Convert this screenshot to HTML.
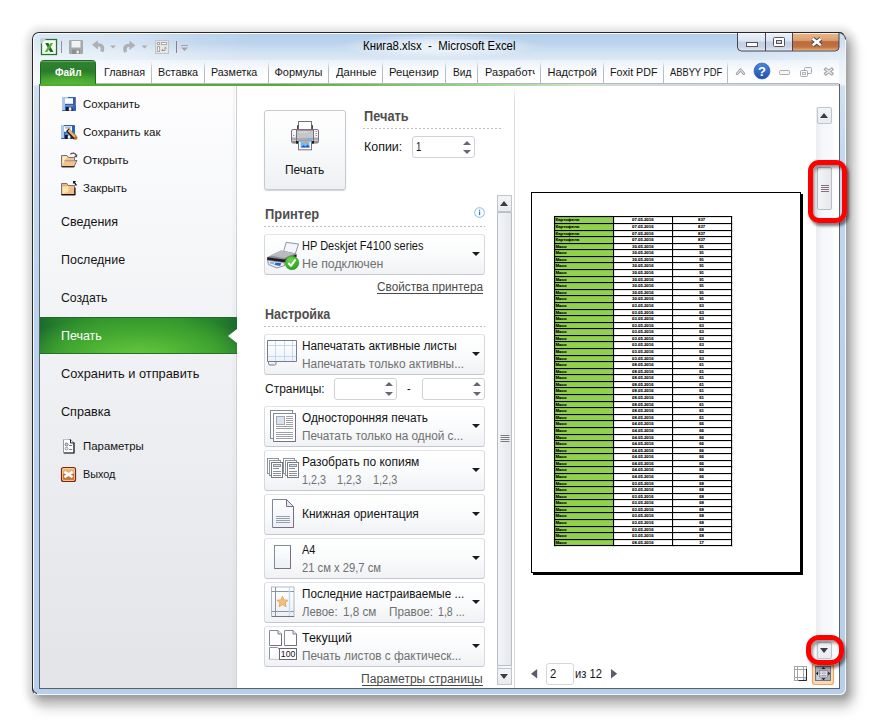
<!DOCTYPE html>
<html lang="ru">
<head>
<meta charset="utf-8">
<title>Книга8.xlsx - Microsoft Excel</title>
<style>
*{box-sizing:border-box;margin:0;padding:0}
html,body{width:879px;height:728px;overflow:hidden;background:#fff}
body{font-family:"Liberation Sans",sans-serif;font-size:12px;color:#1e1e1e;position:relative}
body *{position:absolute}
.t{white-space:pre;line-height:20px;transform-origin:0 0;display:block}
/* window chrome */
#shadow{left:33px;top:33px;width:813px;height:662px;border-radius:7px;
 box-shadow:1px 2px 6px 8px rgba(0,0,0,.11),3px 4px 4px 0 rgba(0,0,0,.17),5px 10px 12px 4px rgba(0,0,0,.16)}
#frame{left:32px;top:32px;width:814px;height:663px;border-radius:7px 7px 6px 6px;border:1px solid #26282c;border-bottom-color:#f4f6f8;border-right-color:#f4f6f8;
 background:linear-gradient(90deg,rgba(255,255,255,.5) 0,rgba(255,255,255,.38) 12%,rgba(255,255,255,.12) 20%,rgba(255,255,255,0) 27%,rgba(255,255,255,0) 88%,rgba(255,255,255,.3) 100%) 0 0/100% 52px no-repeat,
 linear-gradient(180deg,#b6cfeb 0,#bcd3ec 10px,#d3e2f2 20px,#e3ecf7 32px,#eef4fa 50px,#cfe0f3 54px,#c4d9f0 120px,#b9d2ed 300px,#b6d0ec 100%);overflow:hidden}
#frame .hl{left:0;top:0;right:-1px;bottom:-1px;border:1px solid rgba(255,255,255,.9);border-right:0;border-bottom:0;border-radius:6px 0 0 0}
#tabrow{left:40px;top:60px;width:799px;height:23px;background:linear-gradient(180deg,rgba(255,255,255,.35) 0,rgba(255,255,255,.9) 60%,#fff 100%)}
.sep{top:61px;width:1px;height:22px;background:linear-gradient(180deg,rgba(176,184,196,0) 0,#b9c0ca 35%,#b4bac4 100%)}
#file{left:40px;top:60px;width:56px;height:25px;border-radius:4px 4px 0 0;border:1px solid #1d6a1f;border-bottom:0;
 background:radial-gradient(ellipse 40px 14px at 50% 100%,#58b838 0,rgba(88,184,56,0) 100%),linear-gradient(180deg,#2f8430 0,#2a7c2b 42%,#3c9a2c 74%,#4db233 100%)}
#file i{left:0;top:0;right:0;height:1px;background:rgba(255,255,255,.25);border-radius:4px 4px 0 0}
#tline{left:96px;top:83px;width:743px;height:1px;background:#b4b8c6}
#gline{left:40px;top:84px;width:799px;height:2px;background:linear-gradient(90deg,#52ab2c 0,#58ad30 30%,#7fc568 45%,#a6d898 58%,#cfe3ca 68%,#d4d8dc 78%,#d0d4d9 100%)}
#inL{left:39px;top:84px;width:1px;height:605px;background:#5b6168}
#inR{left:839px;top:84px;width:1px;height:605px;background:#5b6168}
#inB{left:39px;top:688px;width:801px;height:1px;background:#5b6168}
/* backstage */
#content{left:40px;top:86px;width:799px;height:602px;background:#fff}
#nav{left:40px;top:86px;width:197px;height:602px;background:linear-gradient(180deg,#fdfdfe 0,#f6f7f9 25%,#eff0f3 50%,#e8eaed 75%,#e2e4e7 100%)}
#navr{left:232px;top:86px;width:5px;height:602px;background:linear-gradient(90deg,rgba(190,196,206,0) 0,rgba(190,196,206,.22) 80%,rgba(190,196,206,0) 80%);border-right:1px solid #ccd0d5}
#sel{left:40px;top:317px;width:197px;height:37px;background:radial-gradient(ellipse 125px 44px at 50% 112%,#66c942 0,#55b938 30%,#43a830 58%,rgba(58,160,46,0) 100%),linear-gradient(90deg,#1d6b2d 0,#27842c 12%,#2f932d 30%,#2f932d 70%,#27842c 88%,#1d6b2d 100%);border-top:1px solid #1b6a28;border-bottom:1px solid #1f7226}
#notch{left:228px;top:329px;width:0;height:0;border-style:solid;border-width:7px 9px 7px 0;border-color:transparent #fff transparent transparent}
#vdiv{left:514px;top:86px;width:1px;height:602px;background:linear-gradient(180deg,rgba(211,215,221,0) 0,#d9dde2 14px,#d3d7dd 100%)}
/* controls */
.dd{left:264px;width:221px;height:41px;border:1px solid #d6d9de;border-top-color:#e0e3e7;border-bottom-color:#c3c7cd;border-radius:3px;background:linear-gradient(180deg,#fff 0,#fafbfc 50%,#f0f2f5 100%)}
.arr{width:0;height:0;border-style:solid;border-width:4px 4px 0 4px;border-color:#1c1c1c transparent transparent transparent}
.spin{height:22px;border:1px solid #cfd3d8;border-radius:3px;background:#fff}
.su{width:0;height:0;border-style:solid;border-width:0 4px 4px 4px;border-color:transparent transparent #6c6474 transparent}
.sd{width:0;height:0;border-style:solid;border-width:4px 4px 0 4px;border-color:#6c6474 transparent transparent transparent}
.dots{height:1px;background:repeating-linear-gradient(90deg,#bdbdbd 0,#bdbdbd 2px,transparent 2px,transparent 4px)}
.ul{height:1px;background:#4a4a4a}
#pbtn{left:264px;top:110px;width:82px;height:80px;border:1px solid #c6cad0;border-radius:3px;background:linear-gradient(180deg,#fefefe 0,#f9fafb 45%,#eef0f3 100%);box-shadow:0 1px 1px rgba(0,0,0,.18)}
/* scrollbars */
.sbtrack{background:linear-gradient(90deg,#e9ecf1 0,#f6f7fa 40%,#f9fafc 100%)}
.sbbtn{width:15px;border:1px solid #c0c4cc;border-radius:2px;background:linear-gradient(180deg,#f4f5f8 0,#e9ebef 100%)}
.sbthumb{width:15px;border:1px solid #b9bdc5;border-radius:2px;background:linear-gradient(90deg,#f3f4f7 0,#e6e8ec 100%)}
.up{width:0;height:0;border-style:solid;border-width:0 4.5px 5px 4.5px;border-color:transparent transparent #3c3c44 transparent}
.dn{width:0;height:0;border-style:solid;border-width:5px 4.5px 0 4.5px;border-color:#3c3c44 transparent transparent transparent}
/* preview */
#page{left:531px;top:192px;width:270px;height:381px;background:#fff;border:1px solid #000;box-shadow:2px 2px 0 0 #000}
.red{border:5px solid #ff0000;border-radius:11px;box-shadow:2px 3px 3px rgba(0,0,0,.5),inset 2px 3px 3px rgba(0,0,0,.4)}

#tglow{left:340px;top:34px;width:200px;height:24px;border-radius:12px;background:radial-gradient(ellipse 50% 50% at 50% 50%,rgba(255,255,255,.75) 0,rgba(255,255,255,.5) 50%,rgba(255,255,255,0) 100%)}

</style>
</head>
<body>
<div id="shadow"></div>
<div id="frame"><div class="hl"></div></div>
<div id="tglow"></div>
<div id="tabrow"></div>
<div id="file"><i></i></div>
<div class="sep" style="left:151px"></div><div class="sep" style="left:204px"></div><div class="sep" style="left:268px"></div>
<div class="sep" style="left:328px"></div><div class="sep" style="left:382px"></div><div class="sep" style="left:445px"></div>
<div class="sep" style="left:477px"></div><div class="sep" style="left:540px"></div><div class="sep" style="left:603px"></div>
<div class="sep" style="left:663px"></div><div class="sep" style="left:727px"></div>
<div id="content"></div>
<div id="nav"></div><div id="navr"></div>
<div id="sel"></div><div id="notch"></div>
<div id="vdiv"></div>
<div id="tline"></div><div id="gline"></div>
<div id="inL"></div><div id="inR"></div><div id="inB"></div>

<!-- print panel -->
<div id="pbtn"></div>
<div class="dots" style="left:363px;top:128px;width:139px"></div>
<div class="spin" style="left:412px;top:136px;width:63px"></div>
<div class="su" style="left:463px;top:141px"></div><div class="sd" style="left:463px;top:150px"></div>
<div class="dots" style="left:264px;top:226px;width:221px"></div>
<div class="dd" style="top:234px"></div><div class="arr" style="left:472px;top:252px"></div>
<div class="ul" style="left:377px;top:293px;width:106px"></div>
<div class="dots" style="left:264px;top:326px;width:221px"></div>
<div class="dd" style="top:334px"></div><div class="arr" style="left:472px;top:352px"></div>
<div class="spin" style="left:334px;top:378px;width:63px"></div>
<div class="su" style="left:385px;top:382px"></div><div class="sd" style="left:385px;top:392px"></div>
<div class="spin" style="left:422px;top:378px;width:63px"></div>
<div class="su" style="left:473px;top:382px"></div><div class="sd" style="left:473px;top:392px"></div>
<div class="dd" style="top:406px"></div><div class="arr" style="left:472px;top:424px"></div>
<div class="dd" style="top:450px"></div><div class="arr" style="left:472px;top:468px"></div>
<div class="dd" style="top:494px"></div><div class="arr" style="left:472px;top:512px"></div>
<div class="dd" style="top:538px"></div><div class="arr" style="left:472px;top:556px"></div>
<div class="dd" style="top:582px"></div><div class="arr" style="left:472px;top:600px"></div>
<div class="dd" style="top:626px"></div><div class="arr" style="left:472px;top:644px"></div>
<div class="ul" style="left:362px;top:685px;width:121px"></div>

<!-- settings scrollbar -->
<div class="sbtrack" style="left:497px;top:195px;width:15px;height:490px;border-left:1px solid #c9cdd3;border-right:1px solid #c9cdd3"></div>
<div class="sbbtn" style="left:497px;top:195px;height:17px"></div><div class="up" style="left:500px;top:201px"></div>
<div class="sbthumb" style="left:497px;top:212px;height:454px"></div>
<div class="sbbtn" style="left:497px;top:668px;height:17px"></div><div class="dn" style="left:500px;top:674px"></div>

<!-- preview -->
<div id="page"></div>
<svg id="ptable" width="180" height="332" viewBox="553 215 180 332" style="left:553px;top:215px" font-family="Liberation Sans, sans-serif" font-size="4.3" font-weight="bold" fill="#000" stroke="#000" stroke-width="0.1">
<rect x="554" y="216" width="59" height="329" fill="#92d050"/>
<g shape-rendering="crispEdges" fill="#000">
<rect x="554" y="216" width="178" height="1"/>
<rect x="554" y="223" width="178" height="1"/>
<rect x="554" y="230" width="178" height="1"/>
<rect x="554" y="236" width="178" height="1"/>
<rect x="554" y="243" width="178" height="1"/>
<rect x="554" y="249" width="178" height="1"/>
<rect x="554" y="256" width="178" height="1"/>
<rect x="554" y="262" width="178" height="1"/>
<rect x="554" y="269" width="178" height="1"/>
<rect x="554" y="276" width="178" height="1"/>
<rect x="554" y="282" width="178" height="1"/>
<rect x="554" y="289" width="178" height="1"/>
<rect x="554" y="295" width="178" height="1"/>
<rect x="554" y="302" width="178" height="1"/>
<rect x="554" y="309" width="178" height="1"/>
<rect x="554" y="315" width="178" height="1"/>
<rect x="554" y="322" width="178" height="1"/>
<rect x="554" y="328" width="178" height="1"/>
<rect x="554" y="335" width="178" height="1"/>
<rect x="554" y="341" width="178" height="1"/>
<rect x="554" y="348" width="178" height="1"/>
<rect x="554" y="355" width="178" height="1"/>
<rect x="554" y="361" width="178" height="1"/>
<rect x="554" y="368" width="178" height="1"/>
<rect x="554" y="374" width="178" height="1"/>
<rect x="554" y="381" width="178" height="1"/>
<rect x="554" y="387" width="178" height="1"/>
<rect x="554" y="394" width="178" height="1"/>
<rect x="554" y="401" width="178" height="1"/>
<rect x="554" y="407" width="178" height="1"/>
<rect x="554" y="414" width="178" height="1"/>
<rect x="554" y="420" width="178" height="1"/>
<rect x="554" y="427" width="178" height="1"/>
<rect x="554" y="434" width="178" height="1"/>
<rect x="554" y="440" width="178" height="1"/>
<rect x="554" y="447" width="178" height="1"/>
<rect x="554" y="453" width="178" height="1"/>
<rect x="554" y="460" width="178" height="1"/>
<rect x="554" y="466" width="178" height="1"/>
<rect x="554" y="473" width="178" height="1"/>
<rect x="554" y="480" width="178" height="1"/>
<rect x="554" y="486" width="178" height="1"/>
<rect x="554" y="493" width="178" height="1"/>
<rect x="554" y="499" width="178" height="1"/>
<rect x="554" y="506" width="178" height="1"/>
<rect x="554" y="512" width="178" height="1"/>
<rect x="554" y="519" width="178" height="1"/>
<rect x="554" y="526" width="178" height="1"/>
<rect x="554" y="532" width="178" height="1"/>
<rect x="554" y="539" width="178" height="1"/>
<rect x="554" y="545" width="178" height="1"/>
<rect x="554" y="216" width="1" height="330"/>
<rect x="613" y="216" width="1" height="330"/>
<rect x="672" y="216" width="1" height="330"/>
<rect x="731" y="216" width="1" height="330"/>
</g>
<text x="555.5" y="221.2">Картофель</text><text x="642.8" y="221.2" text-anchor="middle">07.05.2016</text><text x="701.6" y="221.2" text-anchor="middle">837</text>
<text x="555.5" y="228.2">Картофель</text><text x="642.8" y="228.2" text-anchor="middle">07.05.2016</text><text x="701.6" y="228.2" text-anchor="middle">837</text>
<text x="555.5" y="234.7">Картофель</text><text x="642.8" y="234.7" text-anchor="middle">07.05.2016</text><text x="701.6" y="234.7" text-anchor="middle">837</text>
<text x="555.5" y="241.2">Картофель</text><text x="642.8" y="241.2" text-anchor="middle">07.05.2016</text><text x="701.6" y="241.2" text-anchor="middle">837</text>
<text x="555.5" y="247.7">Мясо</text><text x="642.8" y="247.7" text-anchor="middle">30.05.2016</text><text x="701.6" y="247.7" text-anchor="middle">91</text>
<text x="555.5" y="254.2">Мясо</text><text x="642.8" y="254.2" text-anchor="middle">30.05.2016</text><text x="701.6" y="254.2" text-anchor="middle">91</text>
<text x="555.5" y="260.6">Мясо</text><text x="642.8" y="260.6" text-anchor="middle">30.05.2016</text><text x="701.6" y="260.6" text-anchor="middle">91</text>
<text x="555.5" y="267.1">Мясо</text><text x="642.8" y="267.1" text-anchor="middle">30.05.2016</text><text x="701.6" y="267.1" text-anchor="middle">91</text>
<text x="555.5" y="274.1">Мясо</text><text x="642.8" y="274.1" text-anchor="middle">30.05.2016</text><text x="701.6" y="274.1" text-anchor="middle">91</text>
<text x="555.5" y="280.6">Мясо</text><text x="642.8" y="280.6" text-anchor="middle">30.05.2016</text><text x="701.6" y="280.6" text-anchor="middle">91</text>
<text x="555.5" y="287.1">Мясо</text><text x="642.8" y="287.1" text-anchor="middle">30.05.2016</text><text x="701.6" y="287.1" text-anchor="middle">91</text>
<text x="555.5" y="293.6">Мясо</text><text x="642.8" y="293.6" text-anchor="middle">30.05.2016</text><text x="701.6" y="293.6" text-anchor="middle">91</text>
<text x="555.5" y="300.1">Мясо</text><text x="642.8" y="300.1" text-anchor="middle">30.05.2016</text><text x="701.6" y="300.1" text-anchor="middle">91</text>
<text x="555.5" y="307.1">Мясо</text><text x="642.8" y="307.1" text-anchor="middle">03.05.2016</text><text x="701.6" y="307.1" text-anchor="middle">63</text>
<text x="555.5" y="313.6">Мясо</text><text x="642.8" y="313.6" text-anchor="middle">03.05.2016</text><text x="701.6" y="313.6" text-anchor="middle">63</text>
<text x="555.5" y="320.1">Мясо</text><text x="642.8" y="320.1" text-anchor="middle">03.05.2016</text><text x="701.6" y="320.1" text-anchor="middle">63</text>
<text x="555.5" y="326.6">Мясо</text><text x="642.8" y="326.6" text-anchor="middle">03.05.2016</text><text x="701.6" y="326.6" text-anchor="middle">63</text>
<text x="555.5" y="333.1">Мясо</text><text x="642.8" y="333.1" text-anchor="middle">03.05.2016</text><text x="701.6" y="333.1" text-anchor="middle">63</text>
<text x="555.5" y="339.6">Мясо</text><text x="642.8" y="339.6" text-anchor="middle">03.05.2016</text><text x="701.6" y="339.6" text-anchor="middle">63</text>
<text x="555.5" y="346.1">Мясо</text><text x="642.8" y="346.1" text-anchor="middle">03.05.2016</text><text x="701.6" y="346.1" text-anchor="middle">63</text>
<text x="555.5" y="353.1">Мясо</text><text x="642.8" y="353.1" text-anchor="middle">03.05.2016</text><text x="701.6" y="353.1" text-anchor="middle">63</text>
<text x="555.5" y="359.6">Мясо</text><text x="642.8" y="359.6" text-anchor="middle">03.05.2016</text><text x="701.6" y="359.6" text-anchor="middle">63</text>
<text x="555.5" y="366.1">Мясо</text><text x="642.8" y="366.1" text-anchor="middle">08.05.2016</text><text x="701.6" y="366.1" text-anchor="middle">61</text>
<text x="555.5" y="372.6">Мясо</text><text x="642.8" y="372.6" text-anchor="middle">08.05.2016</text><text x="701.6" y="372.6" text-anchor="middle">61</text>
<text x="555.5" y="379.1">Мясо</text><text x="642.8" y="379.1" text-anchor="middle">08.05.2016</text><text x="701.6" y="379.1" text-anchor="middle">61</text>
<text x="555.5" y="385.6">Мясо</text><text x="642.8" y="385.6" text-anchor="middle">08.05.2016</text><text x="701.6" y="385.6" text-anchor="middle">61</text>
<text x="555.5" y="392.1">Мясо</text><text x="642.8" y="392.1" text-anchor="middle">08.05.2016</text><text x="701.6" y="392.1" text-anchor="middle">61</text>
<text x="555.5" y="399.1">Мясо</text><text x="642.8" y="399.1" text-anchor="middle">08.05.2016</text><text x="701.6" y="399.1" text-anchor="middle">61</text>
<text x="555.5" y="405.6">Мясо</text><text x="642.8" y="405.6" text-anchor="middle">08.05.2016</text><text x="701.6" y="405.6" text-anchor="middle">61</text>
<text x="555.5" y="412.1">Мясо</text><text x="642.8" y="412.1" text-anchor="middle">08.05.2016</text><text x="701.6" y="412.1" text-anchor="middle">61</text>
<text x="555.5" y="418.6">Мясо</text><text x="642.8" y="418.6" text-anchor="middle">08.05.2016</text><text x="701.6" y="418.6" text-anchor="middle">61</text>
<text x="555.5" y="425.1">Мясо</text><text x="642.8" y="425.1" text-anchor="middle">04.05.2016</text><text x="701.6" y="425.1" text-anchor="middle">66</text>
<text x="555.5" y="432.1">Мясо</text><text x="642.8" y="432.1" text-anchor="middle">04.05.2016</text><text x="701.6" y="432.1" text-anchor="middle">66</text>
<text x="555.5" y="438.6">Мясо</text><text x="642.8" y="438.6" text-anchor="middle">04.05.2016</text><text x="701.6" y="438.6" text-anchor="middle">66</text>
<text x="555.5" y="445.1">Мясо</text><text x="642.8" y="445.1" text-anchor="middle">04.05.2016</text><text x="701.6" y="445.1" text-anchor="middle">66</text>
<text x="555.5" y="451.6">Мясо</text><text x="642.8" y="451.6" text-anchor="middle">04.05.2016</text><text x="701.6" y="451.6" text-anchor="middle">66</text>
<text x="555.5" y="458.1">Мясо</text><text x="642.8" y="458.1" text-anchor="middle">04.05.2016</text><text x="701.6" y="458.1" text-anchor="middle">66</text>
<text x="555.5" y="464.6">Мясо</text><text x="642.8" y="464.6" text-anchor="middle">04.05.2016</text><text x="701.6" y="464.6" text-anchor="middle">66</text>
<text x="555.5" y="471.1">Мясо</text><text x="642.8" y="471.1" text-anchor="middle">04.05.2016</text><text x="701.6" y="471.1" text-anchor="middle">66</text>
<text x="555.5" y="478.1">Мясо</text><text x="642.8" y="478.1" text-anchor="middle">04.05.2016</text><text x="701.6" y="478.1" text-anchor="middle">66</text>
<text x="555.5" y="484.6">Мясо</text><text x="642.8" y="484.6" text-anchor="middle">03.05.2016</text><text x="701.6" y="484.6" text-anchor="middle">68</text>
<text x="555.5" y="491.1">Мясо</text><text x="642.8" y="491.1" text-anchor="middle">03.05.2016</text><text x="701.6" y="491.1" text-anchor="middle">68</text>
<text x="555.5" y="497.6">Мясо</text><text x="642.8" y="497.6" text-anchor="middle">03.05.2016</text><text x="701.6" y="497.6" text-anchor="middle">68</text>
<text x="555.5" y="504.1">Мясо</text><text x="642.8" y="504.1" text-anchor="middle">03.05.2016</text><text x="701.6" y="504.1" text-anchor="middle">68</text>
<text x="555.5" y="510.6">Мясо</text><text x="642.8" y="510.6" text-anchor="middle">03.05.2016</text><text x="701.6" y="510.6" text-anchor="middle">68</text>
<text x="555.5" y="517.1">Мясо</text><text x="642.8" y="517.1" text-anchor="middle">03.05.2016</text><text x="701.6" y="517.1" text-anchor="middle">68</text>
<text x="555.5" y="524.1">Мясо</text><text x="642.8" y="524.1" text-anchor="middle">03.05.2016</text><text x="701.6" y="524.1" text-anchor="middle">68</text>
<text x="555.5" y="530.6">Мясо</text><text x="642.8" y="530.6" text-anchor="middle">03.05.2016</text><text x="701.6" y="530.6" text-anchor="middle">68</text>
<text x="555.5" y="537.1">Мясо</text><text x="642.8" y="537.1" text-anchor="middle">03.05.2016</text><text x="701.6" y="537.1" text-anchor="middle">68</text>
<text x="555.5" y="543.6">Мясо</text><text x="642.8" y="543.6" text-anchor="middle">08.05.2016</text><text x="701.6" y="543.6" text-anchor="middle">17</text>
</svg>
<div class="sbtrack" style="left:816px;top:107px;width:17px;height:553px"></div>
<div class="sbbtn" style="left:817px;top:107px;height:17px"></div><div class="up" style="left:820px;top:113px"></div>
<div class="sbthumb" style="left:817px;top:167px;height:43px"></div>
<div class="sbbtn" style="left:817px;top:642px;height:17px"></div><div class="dn" style="left:820px;top:648px"></div>
<div class="spin" style="left:546px;top:663px;width:28px;height:22px;border-color:#d5d8dc"></div>

<svg id="icons" width="879" height="728" viewBox="0 0 879 728" style="left:0;top:0">
<defs>
<linearGradient id="gCap" x1="0" y1="0" x2="0" y2="1"><stop offset="0" stop-color="#eaf1fa"/><stop offset=".45" stop-color="#dbe5f2"/><stop offset=".5" stop-color="#c3cfe2"/><stop offset=".78" stop-color="#c9d5e6"/><stop offset="1" stop-color="#e4ecf6"/></linearGradient>
<linearGradient id="gClose" x1="0" y1="0" x2="0" y2="1"><stop offset="0" stop-color="#e9b889"/><stop offset=".42" stop-color="#dea070"/><stop offset=".5" stop-color="#b9693a"/><stop offset=".8" stop-color="#c07442"/><stop offset="1" stop-color="#eab06c"/></linearGradient>
<linearGradient id="gHelp" x1="0" y1="0" x2="0" y2="1"><stop offset="0" stop-color="#4a86dc"/><stop offset="1" stop-color="#1f4fae"/></linearGradient>
<linearGradient id="gPaper" x1="0" y1="0" x2="0" y2="1"><stop offset="0" stop-color="#ffffff"/><stop offset="1" stop-color="#eaf0f8"/></linearGradient>
<linearGradient id="gFold" x1="0" y1="0" x2="0" y2="1"><stop offset="0" stop-color="#fbe6b8"/><stop offset="1" stop-color="#e9a866"/></linearGradient>
<linearGradient id="gExit" x1="0" y1="0" x2="0" y2="1"><stop offset="0" stop-color="#f3c48a"/><stop offset=".45" stop-color="#e09a58"/><stop offset=".5" stop-color="#bd6a2c"/><stop offset=".85" stop-color="#c87a3a"/><stop offset="1" stop-color="#f0b878"/></linearGradient>
<radialGradient id="gChk" cx=".4" cy=".3" r=".8"><stop offset="0" stop-color="#6fd44a"/><stop offset="1" stop-color="#1f9a18"/></radialGradient>
</defs>

<!-- Excel application icon -->
<g>
<rect x="41.500" y="39.500" width="15" height="15" fill="#fbfdfa" stroke="#1e7a2a" stroke-width="1.300"/>
<path d="M41,39 l5,0 l-5,5z" fill="#c9cdc9"/>
<path d="M45.200,43 L48.400,43 L53.400,52 L50.200,52z" fill="#1a6a1e"/>
<path d="M50.600,43 L53.200,43 L47.400,52 L44.600,52z" fill="#55b82e"/>
</g>
<!-- quick access toolbar (disabled) -->
<rect x="61" y="41" width="1" height="12" fill="#9a8e9e"/>
<g>
<rect x="69" y="40" width="14" height="14" rx="1" fill="#a7a8ab"/>
<rect x="71.5" y="41" width="9" height="6.5" fill="#f1f2f4"/>
<rect x="72" y="49.5" width="8" height="4.5" fill="#8e8f93"/>
<rect x="76.5" y="50.5" width="2.5" height="3" fill="#e6e6e8"/>
</g>
<g fill="#aeb0b4">
<path d="M92,44.800 l6,-4.600 v3 c5.600,-.4 7.600,4 5.400,9 l-3.200,-1.200 c1.400,-3 .2,-4.800 -2.200,-4.600 v3z"/>
<path d="M110,45.5 h6 l-3,3z"/>
<path d="M135.500,45.300 l-6,-4.600 v3 c-5.600,-.4 -7.600,4 -5.400,9 l3.200,-1.200 c-1.400,-3 -.2,-4.800 2.200,-4.600 v3z"/>
<path d="M141.5,45.5 h6 l-3,3z"/>
</g>
<g>
<rect x="155.5" y="40.500" width="13" height="13" fill="#e6e6e7" stroke="#c3c3c6"/>
<rect x="157.500" y="42.500" width="2" height="2" fill="#fff" stroke="#a8a8ac"/>
<rect x="161.500" y="42.500" width="5" height="2" fill="#fff" stroke="#a8a8ac"/>
<rect x="157.500" y="46.500" width="2" height="5" fill="#fff" stroke="#a8a8ac"/>
<path d="M162,50.500 h3 M165,47.500 v3 M161.500,50.500 l1.500,-1.500 M165,47 l1.500,1.500" stroke="#9a9a9e" fill="none"/>
</g>
<rect x="176" y="41" width="1" height="12" fill="#8c7e8e"/>
<g fill="#a3a3a7"><rect x="181" y="45" width="7" height="1"/><path d="M181,47.500 h7 l-3.500,3.500z"/></g>

<!-- caption buttons -->
<g>
<path d="M737.500,33 v14 a4,4 0 0 0 4,4 h93.500 a4,4 0 0 0 4,-4 v-14z" fill="url(#gCap)"/>
<path d="M792.500,33 h46.500 v14 a3.500,3.500 0 0 1 -3.500,3.500 h-43z" fill="url(#gClose)"/>
<path d="M738.500,33.500 h100" stroke="rgba(255,255,255,.7)" fill="none"/>
<path d="M737.500,33 v14 a4,4 0 0 0 4,4 h93.500 a4,4 0 0 0 4,-4 v-14 M765.500,33 v18 M792.500,33 v18" fill="none" stroke="#4a4450"/>
<rect x="746.500" y="42.500" width="11" height="4" fill="#fff" stroke="#56535e"/>
<rect x="773.500" y="37.500" width="11" height="9" rx="1" fill="#fff" stroke="#56535e"/>
<rect x="776.500" y="40.500" width="5" height="3" fill="#c9d4e4" stroke="#56535e"/>
<path d="M812.700,38.700 L820.800,45.300 M820.800,38.700 L812.700,45.300" stroke="#4c4650" stroke-width="4.600" fill="none"/>
<path d="M812.700,38.700 L820.800,45.300 M820.800,38.700 L812.700,45.300" stroke="#fff" stroke-width="2.500" fill="none"/>
</g>
<!-- window corner outlines -->
<path d="M838.500,32.500 a7,7 0 0 1 7,7" fill="none" stroke="#26282c"/>
<path d="M32.500,687 a7,7 0 0 0 4.500,6.600" fill="none" stroke="#26282c"/>

<!-- ribbon right-hand controls -->
<g>
<path d="M737.200,73.600 L740.500,69.800 L743.800,73.600" stroke="#9fa0a6" stroke-width="2.800" fill="none" stroke-linejoin="round" stroke-linecap="round"/>
<path d="M737.200,73.600 L740.500,69.800 L743.800,73.600" stroke="#f7f8fa" stroke-width="1" fill="none" stroke-linejoin="round" stroke-linecap="round"/>
<circle cx="762" cy="71" r="8" fill="url(#gHelp)" stroke="#2a58b2" stroke-width=".6"/>
<text x="762" y="75.600" text-anchor="middle" font-family="Liberation Sans, sans-serif" font-size="13" font-weight="bold" fill="#fff">?</text>
<rect x="779.500" y="70.500" width="10" height="4" rx="1" fill="#f6f7f9" stroke="#a9aab0"/>
<rect x="804.500" y="67.500" width="7" height="6" rx="1" fill="#f6f7f9" stroke="#a9aab0"/>
<rect x="800.500" y="70.500" width="7" height="6" rx="1" fill="#f6f7f9" stroke="#a9aab0"/>
<rect x="802.500" y="72.500" width="3" height="2" fill="none" stroke="#b5b6bc"/>
<path d="M824.500,68.300 L833,74.700 M833,68.300 L824.500,74.700" stroke="#a4a5ab" stroke-width="3.400" fill="none"/>
<path d="M825.500,69 L832,74 M832,69 L825.500,74" stroke="#eeeff2" stroke-width="1.300" fill="none"/>
</g>
<!-- nav: save -->
<g>
<rect x="62" y="97" width="14" height="14" rx=".8" fill="#2c5fc0"/>
<rect x="62" y="97" width="3" height="13" fill="#a9c6ec"/>
<rect x="62" y="97" width="6" height="1.200" fill="#a9c6ec"/>
<rect x="65" y="98.200" width="8" height="5.600" fill="#fdfeff"/>
<rect x="65" y="105.200" width="8" height="1.300" fill="#6f9ee0"/>
<rect x="66" y="107" width="6.500" height="4" fill="#1a1a1e"/>
<rect x="68.800" y="107.300" width="2.600" height="3.400" fill="#e8f0fa"/>
<path d="M75.500,98 v7 l-3.500,3.500" stroke="#9a7078" stroke-width=".9" fill="none"/>
</g>
<!-- nav: save as -->
<g>
<rect x="61" y="125" width="14" height="14" rx=".8" fill="#2c5fc0"/>
<rect x="61" y="125" width="3" height="13" fill="#a9c6ec"/>
<rect x="64" y="126.200" width="8" height="5.600" fill="#fdfeff"/>
<rect x="65" y="127.400" width="6" height="1" fill="#8a8ea0"/>
<rect x="65" y="133.200" width="7" height="1.300" fill="#6f9ee0"/>
<rect x="65" y="135" width="6.500" height="4" fill="#1a1a1e"/>
<rect x="67.800" y="135.300" width="2.600" height="3.400" fill="#e8f0fa"/>
<path d="M67.500,129.700 L75.500,138.300" stroke="#1c1c1c" stroke-width="4" fill="none"/>
<path d="M68.600,130 L76.300,138" stroke="#f2b270" stroke-width="2.600" fill="none"/>
<path d="M72.500,132 L76.600,136.300" stroke="#4aa02c" stroke-width="1" fill="none"/>
<circle cx="75.800" cy="138" r="1.700" fill="#c8682a"/>
</g>
<!-- nav: open -->
<g>
<path d="M61.500,155.500 h5.500 l1.500,2 h6 v3 h2.500 l-3.300,6.500 h-12.200z" fill="#f3c48c" stroke="#70607c" stroke-width=".9"/>
<path d="M62.500,156.500 h4 l1,1.500 h-1.500 l-3.500,7z" fill="#f9f0b8"/>
<path d="M64.500,160.800 h12" stroke="#8a7a90" stroke-width=".8" fill="none"/>
<path d="M62,166.600 h12.500" stroke="#2a2a2a" stroke-width="1.200" fill="none"/>
<path d="M70.300,154.300 c2,-1.700 4.200,-1.500 5.800,.5" stroke="#5a4e62" stroke-width="1.200" fill="none"/>
<path d="M77.200,153.700 v3.600 h-3.600z" fill="#5a4e62"/>
</g>
<!-- nav: close -->
<g>
<path d="M61.500,183.500 h5.500 l1.200,2 h6.300 v9.500 h-13z" fill="#f2be84" stroke="#70607c" stroke-width=".9"/>
<path d="M62.500,186.500 h6 v5 l-6,2.500z" fill="#f9f0b8" opacity=".8"/>
<path d="M62,185.200 h5" stroke="#e8a050" stroke-width="1" fill="none"/>
<path d="M61.500,194.700 h13.500 v-7" stroke="#141414" stroke-width="1.200" fill="none"/>
<path d="M73,181 h3.300 l-1.300,1.300 l2,2.700 l-1.100,.9 l-2,-2.800 l-1,1.200z" fill="#1a1a1e"/>
</g>
<!-- nav: options -->
<g>
<path d="M63.500,439.500 h7 l3.500,3.500 v10 h-10.500z" fill="#fff" stroke="#8a9098" stroke-width=".9"/>
<path d="M63.500,439.500 h5" stroke="#a6c8ee" stroke-width="1" fill="none"/>
<path d="M70.500,439.500 v3.500 h3.500" fill="none" stroke="#1c1c1c" stroke-width="1"/>
<path d="M74,442.500 v10.500 h-10" fill="none" stroke="#1c1c1c" stroke-width="1.200"/>
<circle cx="66.600" cy="444.500" r="1.400" fill="#cfe0f4" stroke="#6a4a6a" stroke-width=".8"/>
<circle cx="66.600" cy="448.600" r="1.400" fill="#eef4fb" stroke="#6a7a88" stroke-width=".8"/>
<path d="M69.200,445.500 h3 M69.200,449.500 h3" stroke="#707880" stroke-width="1" fill="none"/>
</g>
<!-- nav: exit -->
<g>
<rect x="61.500" y="467.500" width="14" height="14" rx="2" fill="url(#gExit)" stroke="#7c2418" stroke-width="1.200"/>
<rect x="62.500" y="468.500" width="12" height="12" rx="1.500" fill="none" stroke="#f6cf98" stroke-width=".8"/>
<path d="M64.400,471.900 L72.600,477.100 M72.600,471.900 L64.400,477.100" stroke="#fff" stroke-width="2.700" fill="none"/>
</g>

<!-- big print button icon -->
<g>
<rect x="298.500" y="121.500" width="13" height="9" fill="#fff" stroke="#7c6e80"/>
<path d="M297,125.500 l1.500,-1 v5 h-1.500z M313,125.500 l-1.500,-1 v5 h1.500z" fill="#4a4650"/>
<rect x="291.500" y="129.500" width="27" height="13.500" rx="1.500" fill="#f4f4f6" stroke="#7c6e80"/>
<rect x="296" y="130" width="18" height="7.500" fill="#c5c6c8"/>
<rect x="296" y="129.500" width="18" height="1" fill="#7c6e80"/>
<rect x="292" y="137.500" width="26" height="3" fill="#a9adb2"/>
<rect x="307.500" y="138" width="4.500" height="1.600" fill="#5eb4f4"/>
<path d="M296.500,130 v13 M313.500,130 v13" stroke="#7c6e80" stroke-width="1" fill="none"/>
<rect x="296" y="141" width="2.500" height="2.600" fill="#1a1a1a"/><rect x="311.500" y="141" width="2.500" height="2.600" fill="#1a1a1a"/>
<rect x="292" y="141" width="4" height="2" fill="#8c9096"/><rect x="314" y="141" width="4" height="2" fill="#8c9096"/>
<rect x="298.500" y="141" width="13" height="8.800" fill="#fff" stroke="#7c6e80"/>
<rect x="300.500" y="141.500" width="9" height="6" fill="#74bdf4"/>
<path d="M300.500,147.500 l3,-2.600 l2,1.600 l2,-2 l2,2 v1z" fill="#2c5cc0"/>
<circle cx="306" cy="142" r="1.300" fill="#f2a040"/>
<path d="M299.500,132.200 h1.500 M301.700,132.200 h1.500 M303.900,132.200 h1.500 M306.100,132.200 h1.500" stroke="#ececee" stroke-width=".9" fill="none"/>
<path d="M315.500,131.500 h1.500 M315.500,133.500 h1.500 M315.500,135.500 h1.500 M293,135.500 h1.500" stroke="#8a8c92" stroke-width=".9" fill="none"/>
</g>
<!-- info -->
<g>
<circle cx="479.500" cy="212.500" r="4.900" fill="#fff" stroke="#9ccaf0" stroke-width="1.100"/>
<rect x="479" y="211.500" width="1.200" height="3.600" fill="#3c74c4"/><rect x="479" y="209.600" width="1.200" height="1.200" fill="#3c74c4"/>
</g>
<!-- printer + check -->
<g>
<path d="M286.200,242.400 L298.600,244 L295.200,254 L283.600,251.400z" fill="#f4f6f9" stroke="#8c8494" stroke-width=".9"/>
<path d="M267.200,257.300 L281,250.500 L296.500,253.500 L296.500,256.500 L284,262.500 L267.200,260z" fill="#8e9097"/>
<path d="M270,255.600 L281,250.600 L295,253.400 L284,258z" fill="#b9bbc1"/>
<path d="M267.200,257.200 L284,259.600 L296.500,254.500 L296.500,257 L284,262.600 L267.200,260.200z" fill="#1e1e22"/>
<path d="M267.500,260.200 L284,262.600 L284.500,265.500 L277,268 L268.500,264.500z" fill="#f2f4f8" stroke="#7c7484" stroke-width=".8"/>
<path d="M270,261.500 L275,262.300 L273.500,264.500 L269.500,263.300z" fill="#74bdf4"/>
<path d="M275.500,262.500 L281.500,263.300 L280,266 L274.500,265z" fill="#2f62cc"/>
<circle cx="291.900" cy="262.800" r="6.900" fill="url(#gChk)" stroke="#2a9420" stroke-width=".6"/>
<path d="M288.300,263 L290.900,265.800 L295.600,259.300" stroke="#fff" stroke-width="2" fill="none" stroke-linejoin="round"/>
</g>
<!-- dd1: sheet -->
<g>
<path d="M267.500,340.500 h29 v21 h-20.500 v2 a1.500,1.500 0 0 1 -1.500,1.500 h-4.500 a1.500,1.500 0 0 1 -1.500,-1.500 v-2 h-1z" fill="url(#gPaper)" stroke="#7c7a8a"/>
<path d="M275.500,341 v20 M284.500,341 v20 M292.500,341 v20 M268,345.500 h28 M268,356.500 h28" stroke="#c4daf2" stroke-width="1" fill="none"/>
<path d="M268.500,361.500 h7.500" stroke="#7c7a8a" fill="none"/>
</g>
<!-- dd2: one-sided -->
<g>
<rect x="270.500" y="410.500" width="22" height="28" fill="#fff" stroke="#848c94"/>
<rect x="273.500" y="413.500" width="22" height="28" fill="#fff" stroke="#848c94"/>
<path d="M274,441.500 h21.500 v-27" stroke="#7c6e80" fill="none"/>
<rect x="276.500" y="416.500" width="8" height="8" fill="#d9e4f0" stroke="#a6aab0"/>
<path d="M286,416.500 h7 M286,418.500 h7 M286,420.500 h7 M286,422.500 h7 M286,424.500 h7 M276,426.500 h17 M276,428.500 h17 M276,432.500 h17 M276,434.500 h17 M276,436.500 h17 M276,438.500 h17" stroke="#9ea2a8" stroke-width="1" fill="none"/>
</g>
<!-- dd3: collated -->
<g>
<rect x="267.500" y="458.500" width="11" height="15" fill="#fff" stroke="#8c949c"/>
<rect x="269.500" y="460.500" width="11" height="15" fill="#fff" stroke="#8c949c"/>
<rect x="271.500" y="462.500" width="11" height="15" fill="#fff" stroke="#767c86"/>
<rect x="273.500" y="464.500" width="7" height="2" fill="#cfe0f2" stroke="#8c949c"/>
<path d="M273,468.500 h6 M273,471.500 h8 M273,473.500 h8 M273,475.500 h8" stroke="#8c9096" stroke-width="1" fill="none"/>
</g>
<g transform="translate(16,0)">
<rect x="267.500" y="458.500" width="11" height="15" fill="#fff" stroke="#8c949c"/>
<rect x="269.500" y="460.500" width="11" height="15" fill="#fff" stroke="#8c949c"/>
<rect x="271.500" y="462.500" width="11" height="15" fill="#fff" stroke="#767c86"/>
<rect x="273.500" y="464.500" width="7" height="2" fill="#cfe0f2" stroke="#8c949c"/>
<path d="M273,468.500 h6 M273,471.500 h8 M273,473.500 h8 M273,475.500 h8" stroke="#8c9096" stroke-width="1" fill="none"/>
</g>
<!-- dd4: portrait -->
<g>
<path d="M272.500,499.500 h14 l7,7 v21 h-21z" fill="url(#gPaper)" stroke="#808890"/>
<path d="M286.500,499.500 v7 h7z" fill="#dfeaf6" stroke="#7c6e80"/>
<path d="M273,527.500 h20.500 v-20.500" stroke="#7c6e80" fill="none"/>
<path d="M276,516.500 h14 M276,518.500 h14 M276,520.500 h14 M276,522.500 h14" stroke="#9a9ea6" stroke-width="1" fill="none"/>
</g>
<!-- dd5: A4 -->
<g>
<rect x="274.500" y="545.500" width="16" height="23" fill="url(#gPaper)" stroke="#848c96"/>
<path d="M275,568.500 h15.500 v-22" stroke="#7c6e80" fill="none"/>
</g>
<!-- dd6: margins -->
<g>
<rect x="271.500" y="587" width="22.500" height="29.500" fill="url(#gPaper)" stroke="#b4b8be"/>
<path d="M275.500,587 v29.500 M271.500,591.500 h22.500 M271.500,611.500 h22.500" stroke="#8c949c" stroke-width="1" fill="none"/>
<path d="M289.500,587 v29.500" stroke="#c4daf2" stroke-width="1.300" fill="none"/>
<path d="M272,616.500 h22" stroke="#7c6e80" fill="none"/>
<path d="M282.500,596.200 l1.600,3.700 l4,.3 l-3,2.700 l1,3.900 l-3.600,-2.100 l-3.500,2.100 l.9,-3.900 l-3,-2.700 l4,-.3z" fill="#f4c078" stroke="#e2964a" stroke-width=".7"/>
</g>
<!-- dd7: scale -->
<g>
<path d="M269.500,630.500 h8.500 l3.500,3.500 v11.500 h-12z" fill="#fff" stroke="#848c96"/>
<path d="M278,630.500 v3.500 h3.500" fill="#dbe8f6" stroke="#7c6e80" stroke-width=".9"/>
<path d="M270,645.500 h11.500 v-11" stroke="#7c6e80" fill="none"/>
<path d="M284.500,630.500 h8.500 l3.500,3.500 v11.500 h-12z" fill="#fff" stroke="#848c96"/>
<path d="M293,630.500 v3.500 h3.500" fill="#dbe8f6" stroke="#7c6e80" stroke-width=".9"/>
<path d="M285,645.500 h11.500 v-11" stroke="#7c6e80" fill="none"/>
<path d="M269.500,659.500 v-12 h8 l2,2" fill="#fff" stroke="#8c949c"/>
<path d="M269.500,659.500 h10" stroke="#c8ccd0" fill="none"/>
<rect x="279.500" y="648.500" width="17" height="11" fill="#fff" stroke="#6c6474"/>
<text x="288.100" y="657.400" text-anchor="middle" font-family="Liberation Sans, sans-serif" font-size="9.500" fill="#111" textLength="14.500" lengthAdjust="spacingAndGlyphs">100</text>
</g>
<!-- scrollbar grips -->
<path d="M821,185.500 h8 M821,187.500 h8 M821,189.500 h8 M821,191.500 h8" stroke="#8a6e80" stroke-width="1" fill="none"/>
<path d="M500.500,435.500 h9 M500.500,437.500 h9 M500.500,439.500 h9 M500.500,441.500 h9" stroke="#7a7a84" stroke-width="1" fill="none"/>
<!-- page navigation arrows -->
<path d="M537.200,669 v9.600 l-6.200,-4.800z" fill="#5c5c6a"/>
<path d="M611,669 v9.600 l6.200,-4.800z" fill="#5c5c6a"/>
<!-- preview: show margins -->
<g>
<rect x="794.500" y="666.500" width="12" height="14" fill="#fff" stroke="#a2a6ac"/>
<path d="M797.500,667 v13.500 M803.500,667 v13.500 M795,669.500 h11.500 M795,677.500 h11.500" stroke="#a2a6ac" stroke-width="1" fill="none"/>
<path d="M806.500,669 v11.500 h-8" stroke="#2a2a2e" stroke-width="1" fill="none"/>
<rect x="804" y="678" width="2" height="2" fill="#bfe0fa"/>
</g>
<!-- preview: zoom to page (selected) -->
<g>
<rect x="812.500" y="663" width="21" height="21.500" rx="2.500" fill="#fbdcae" stroke="#e9a768" stroke-width="1.200"/>
<rect x="815.500" y="666.500" width="15" height="14" fill="#aab2be" stroke="#7a6f88"/>
<rect x="816.500" y="674" width="4" height="6" fill="#c6dcf2" opacity=".8"/>
<rect x="819.500" y="670.500" width="8" height="6.500" fill="#f6f8fb" stroke="#8a8494" stroke-width=".8"/>
<path d="M822,672 h4.500 M822,673.800 h4.500 M822,675.600 h4.500" stroke="#8c929c" stroke-width=".9" fill="none"/>
<path d="M820.500,672 h.9 M820.500,673.800 h.9 M820.500,675.600 h.9" stroke="#50505a" stroke-width=".9" fill="none"/>
<path d="M823.500,667 l2,2 h-4z M823.500,680.200 l2,-2 h-4z M816,673.600 l2,-2 v4z M830.200,673.600 l-2,-2 v4z" fill="#1a1a1e"/>
</g>

</svg>

<span class="t" style="left:362.50px;top:36px;font-size:12px;font-weight:400;color:#000;transform:scaleX(0.9503)">Книга8.xlsx  -  Microsoft Excel</span>
<span class="t" style="left:54.60px;top:62px;font-size:11px;font-weight:700;color:#fff;transform:scaleX(0.9103)">Файл</span>
<span class="t" style="left:104.30px;top:62px;font-size:11px;font-weight:400;color:#161616;transform:scaleX(0.9810)">Главная</span>
<span class="t" style="left:158.30px;top:62px;font-size:11px;font-weight:400;color:#161616;transform:scaleX(0.9805)">Вставка</span>
<span class="t" style="left:211.30px;top:62px;font-size:11px;font-weight:400;color:#161616;transform:scaleX(0.9729)">Разметка</span>
<span class="t" style="left:274.50px;top:62px;font-size:11px;font-weight:400;color:#161616;transform:scaleX(1.0000)">Формулы</span>
<span class="t" style="left:336.02px;top:62px;font-size:11px;font-weight:400;color:#161616;transform:scaleX(1.0195)">Данные</span>
<span class="t" style="left:389.30px;top:62px;font-size:11px;font-weight:400;color:#161616;transform:scaleX(1.0245)">Рецензир</span>
<span class="t" style="left:452.50px;top:62px;font-size:11px;font-weight:400;color:#161616;transform:scaleX(0.9190)">Вид</span>
<div style="left:482px;top:62px;width:53.2px;height:20px;overflow:hidden"><span class="t" style="left:2.60px;top:0;font-size:11px;font-weight:400;color:#161616;transform:scaleX(0.9958)">Разработчик</span></div>
<span class="t" style="left:547.50px;top:62px;font-size:11px;font-weight:400;color:#161616;transform:scaleX(1.0000)">Надстрой</span>
<span class="t" style="left:610.00px;top:62px;font-size:11px;font-weight:400;color:#161616;transform:scaleX(0.9694)">Foxit PDF</span>
<span class="t" style="left:670.00px;top:62px;font-size:11px;font-weight:400;color:#161616;transform:scaleX(0.8468)">ABBYY PDF</span>
<span class="t" style="left:83.30px;top:94px;font-size:11.5px;font-weight:400;color:#141414;transform:scaleX(0.9947)">Сохранить</span>
<span class="t" style="left:83.30px;top:122px;font-size:11.5px;font-weight:400;color:#141414;transform:scaleX(1.0065)">Сохранить как</span>
<span class="t" style="left:83.30px;top:150px;font-size:11.5px;font-weight:400;color:#141414;transform:scaleX(1.0111)">Открыть</span>
<span class="t" style="left:83.30px;top:178px;font-size:11.5px;font-weight:400;color:#141414;transform:scaleX(0.9932)">Закрыть</span>
<span class="t" style="left:61.30px;top:212px;font-size:13px;font-weight:400;color:#141414;transform:scaleX(0.9610)">Сведения</span>
<span class="t" style="left:61.30px;top:250px;font-size:13px;font-weight:400;color:#141414;transform:scaleX(0.9582)">Последние</span>
<span class="t" style="left:61.30px;top:288px;font-size:13px;font-weight:400;color:#141414;transform:scaleX(0.9400)">Создать</span>
<span class="t" style="left:61.30px;top:326px;font-size:13px;font-weight:400;color:#fff;transform:scaleX(0.9581)">Печать</span>
<span class="t" style="left:61.30px;top:364px;font-size:13px;font-weight:400;color:#141414;transform:scaleX(0.9857)">Сохранить и отправить</span>
<span class="t" style="left:61.30px;top:402px;font-size:13px;font-weight:400;color:#141414;transform:scaleX(0.9706)">Справка</span>
<span class="t" style="left:83.30px;top:436px;font-size:11.5px;font-weight:400;color:#141414;transform:scaleX(0.9918)">Параметры</span>
<span class="t" style="left:83.30px;top:464px;font-size:11.5px;font-weight:400;color:#141414;transform:scaleX(0.9429)">Выход</span>
<span class="t" style="left:284.90px;top:160px;font-size:12px;font-weight:400;color:#141414;transform:scaleX(0.9974)">Печать</span>
<span class="t" style="left:364.00px;top:106px;font-size:14px;font-weight:700;color:#4f4f4f;transform:scaleX(0.9122)">Печать</span>
<span class="t" style="left:363.70px;top:137px;font-size:12px;font-weight:400;color:#141414;transform:scaleX(1.0361)">Копии:</span>
<span class="t" style="left:416.00px;top:137px;font-size:12px;font-weight:400;color:#141414;transform:scaleX(0.8000)">1</span>
<span class="t" style="left:265.30px;top:204px;font-size:14px;font-weight:700;color:#4f4f4f;transform:scaleX(0.9203)">Принтер</span>
<span class="t" style="left:301.90px;top:236px;font-size:12px;font-weight:400;color:#141414;transform:scaleX(0.9165)">HP Deskjet F4100 series</span>
<span class="t" style="left:301.90px;top:254px;font-size:12px;font-weight:400;color:#707070;transform:scaleX(1.0266)">Не подключен</span>
<span class="t" style="left:376.90px;top:277px;font-size:12px;font-weight:400;color:#4a4a4a;transform:scaleX(0.9824)">Свойства принтера</span>
<span class="t" style="left:265.30px;top:304px;font-size:14px;font-weight:700;color:#4f4f4f;transform:scaleX(0.8932)">Настройка</span>
<span class="t" style="left:301.90px;top:336px;font-size:12px;font-weight:400;color:#141414;transform:scaleX(0.9834)">Напечатать активные листы</span>
<span class="t" style="left:301.90px;top:354px;font-size:12px;font-weight:400;color:#707070;transform:scaleX(0.9883)">Напечатать только активны...</span>
<span class="t" style="left:264.90px;top:379px;font-size:12px;font-weight:400;color:#141414;transform:scaleX(0.9983)">Страницы:</span>
<span class="t" style="left:407.40px;top:379px;font-size:12px;font-weight:400;color:#141414;transform:scaleX(0.9000)">-</span>
<span class="t" style="left:301.90px;top:408px;font-size:12px;font-weight:400;color:#141414;transform:scaleX(0.9875)">Односторонняя печать</span>
<span class="t" style="left:301.90px;top:426px;font-size:12px;font-weight:400;color:#707070;transform:scaleX(0.9823)">Печатать только на одной с...</span>
<span class="t" style="left:301.90px;top:452px;font-size:12px;font-weight:400;color:#141414;transform:scaleX(0.9966)">Разобрать по копиям</span>
<span class="t" style="left:301.60px;top:470px;font-size:12px;font-weight:400;color:#707070;transform:scaleX(0.9037)">1,2,3</span>
<span class="t" style="left:337.40px;top:470px;font-size:12px;font-weight:400;color:#707070;transform:scaleX(0.9111)">1,2,3</span>
<span class="t" style="left:372.90px;top:470px;font-size:12px;font-weight:400;color:#707070;transform:scaleX(0.9111)">1,2,3</span>
<span class="t" style="left:301.90px;top:504px;font-size:12px;font-weight:400;color:#141414;transform:scaleX(0.9991)">Книжная ориентация</span>
<span class="t" style="left:301.90px;top:540px;font-size:12px;font-weight:400;color:#141414;transform:scaleX(0.9067)">A4</span>
<span class="t" style="left:301.90px;top:558px;font-size:12px;font-weight:400;color:#707070;transform:scaleX(0.9341)">21 см x 29,7 см</span>
<span class="t" style="left:301.90px;top:584px;font-size:12px;font-weight:400;color:#141414;transform:scaleX(0.9753)">Последние настраиваемые ...</span>
<span class="t" style="left:301.90px;top:602px;font-size:12px;font-weight:400;color:#707070;transform:scaleX(0.9486)">Левое:</span>
<span class="t" style="left:343.40px;top:602px;font-size:12px;font-weight:400;color:#707070;transform:scaleX(0.9735)">1,8 см</span>
<span class="t" style="left:388.90px;top:602px;font-size:12px;font-weight:400;color:#707070;transform:scaleX(0.9795)">Правое:</span>
<span class="t" style="left:438.40px;top:602px;font-size:12px;font-weight:400;color:#707070;transform:scaleX(0.8867)">1,8 ...</span>
<span class="t" style="left:301.90px;top:628px;font-size:12px;font-weight:400;color:#141414;transform:scaleX(1.0396)">Текущий</span>
<span class="t" style="left:301.90px;top:646px;font-size:12px;font-weight:400;color:#707070;transform:scaleX(0.9851)">Печать листов с фактическ...</span>
<span class="t" style="left:361.40px;top:669px;font-size:12px;font-weight:400;color:#4a4a4a;transform:scaleX(1.0050)">Параметры страницы</span>
<span class="t" style="left:550.40px;top:664px;font-size:13px;font-weight:400;color:#141414;transform:scaleX(0.8714)">2</span>
<span class="t" style="left:575.10px;top:664px;font-size:13px;font-weight:400;color:#141414;transform:scaleX(0.8613)">из 12</span>

<div class="red" style="left:808px;top:160px;width:39px;height:63px"></div>
<div class="red" style="left:806px;top:635px;width:38px;height:30px;border-radius:13px"></div>

</body>
</html>
